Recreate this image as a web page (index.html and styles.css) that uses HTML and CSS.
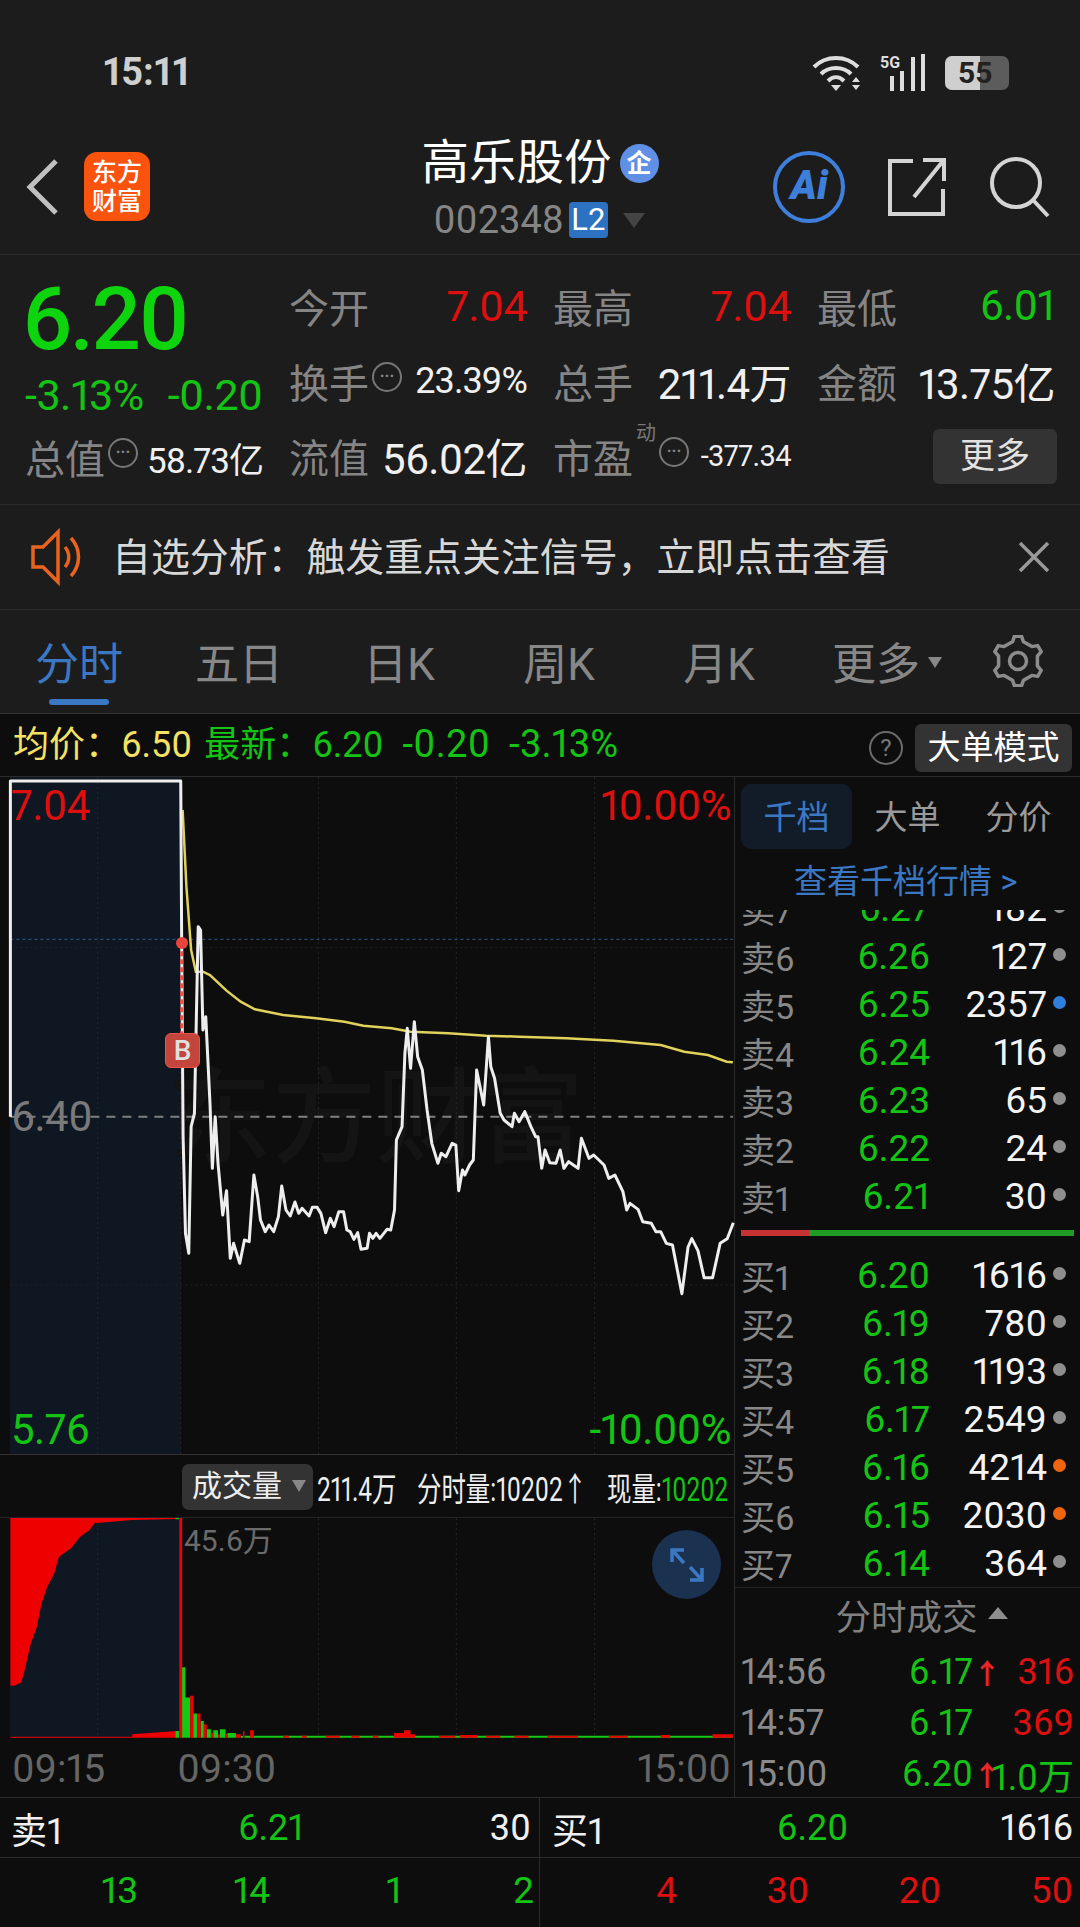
FILE: index.html
```html
<!DOCTYPE html>
<html lang="zh">
    <head>
        <meta charset="UTF-8" />
        <title>高乐股份</title>
        <link rel="stylesheet" href="styles.css">
    </head>
    <body>
        <div class="top-area">
            <div class="status-bar">
                <span class="clock">15:11</span>
                <div class="status-icons">
                    <svg width="52" height="38" viewBox="0 0 52 38" fill="none" stroke="#ddd" stroke-width="4">
                        <path d="M2 13C14 1 34 1 46 13" />
                        <path d="M9 20C17 12 31 12 39 20" />
                        <path d="M16 27C21 22 27 22 32 27" />
                        <path d="M19 31H29L24 37Z" fill="#ddd" stroke="none" />
                        <path d="M44 23L48 28H40ZM40 31H48L44 36Z" fill="#ddd" stroke="none" />
                    </svg>
                    <svg width="46" height="38" viewBox="0 0 46 38" fill="#ddd">
                        <text x="0" y="14" class="five-g">5G</text>
                        <rect x="10" y="22" width="4" height="15" />
                        <rect x="20" y="17" width="4" height="20" />
                        <rect x="31" y="3" width="4" height="34" />
                        <rect x="41" y="0" width="4" height="37" />
                    </svg>
                    <div class="battery"><span class="battery-fill"></span><span class="battery-num">55</span></div>
                </div>
            </div>

            <header class="stock-header">
                <div class="header-left">
                    <svg width="34" height="58" viewBox="0 0 34 58" fill="none" stroke="#c0c0c0" stroke-width="5">
                        <path d="M31 3L5 29L31 55" />
                    </svg>
                    <div class="logo"><span>东方</span><span>财富</span></div>
                </div>
                <div class="header-title">
                    <div class="title-row">
                        <h1>高乐股份</h1>
                        <span class="ent-badge">企</span>
                    </div>
                    <div class="code-row">
                        <span>002348</span>
                        <span class="l2">L2</span>
                        <span class="code-arrow"></span>
                    </div>
                </div>
                <div class="header-right">
                    <div class="ai-btn">Ai</div>
                    <svg width="60" height="60" viewBox="0 0 60 60" fill="none" stroke="#d4d4d4" stroke-width="4">
                        <path d="M26 4H3V57H56V32" />
                        <path d="M56 4L27 40M36 3H57V24" />
                    </svg>
                    <svg width="62" height="62" viewBox="0 0 62 62" fill="none" stroke="#d4d4d4" stroke-width="4">
                        <circle cx="27" cy="27" r="24" />
                        <path d="M44 44L59 60" />
                    </svg>
                </div>
            </header>

            <section class="quote">
                <div class="quote-left">
                    <div class="price">6.20</div>
                    <div class="change"><span>-3.13%</span><span>-0.20</span></div>
                    <div class="total">
                        <span class="lbl">总值</span><span class="more-dot">···</span><span class="val-s">58.73亿</span>
                    </div>
                </div>
                <div class="quote-grid">
                    <div class="cell"><span class="lbl">今开</span><span class="val up">7.04</span></div>
                    <div class="cell"><span class="lbl">最高</span><span class="val up">7.04</span></div>
                    <div class="cell"><span class="lbl">最低</span><span class="val down">6.01</span></div>
                    <div class="cell"><span class="lbl">换手</span><span class="more-dot">···</span><span class="val-s">23.39%</span></div>
                    <div class="cell"><span class="lbl">总手</span><span class="val">211.4万</span></div>
                    <div class="cell"><span class="lbl">金额</span><span class="val">13.75亿</span></div>
                    <div class="cell"><span class="lbl">流值</span><span class="val">56.02亿</span></div>
                    <div class="cell">
                        <span class="lbl">市盈</span><sup class="dong">动</sup><span class="more-dot">···</span><span class="val-xs">-377.34</span>
                    </div>
                    <div class="cell cell-end"><button class="more-btn">更多</button></div>
                </div>
            </section>

            <section class="notice">
                <svg width="52" height="60" viewBox="0 0 52 60" fill="none" stroke="#e8641e" stroke-width="3.5">
                    <path d="M3 20H13L28 5V55L13 40H3Z" />
                    <path d="M35 20C40 26 40 34 35 40" />
                    <path d="M41 11C51 22 51 38 41 49" />
                </svg>
                <p>自选分析：触发重点关注信号，立即点击查看</p>
                <svg class="notice-close" width="32" height="30" viewBox="0 0 32 30" stroke="#999" stroke-width="3.5">
                    <path d="M2 1L30 29M30 1L2 29" />
                </svg>
            </section>

            <nav class="tabs">
                <span class="tab active">分时</span>
                <span class="tab">五日</span>
                <span class="tab">日K</span>
                <span class="tab">周K</span>
                <span class="tab">月K</span>
                <span class="tab tab-more">更多<i></i></span>
                <svg class="gear" width="52" height="52" viewBox="0 0 52 52" fill="none" stroke="#8c8c8c" stroke-width="3.5" stroke-linejoin="round">
                    <path d="M20.5 6.8L22.5 1.2H29.5L31.5 6.8L39.9 11.6L45.7 10.6L49.2 16.6L45.4 21.2V30.8L49.2 35.4L45.7 41.4L39.9 40.4L31.5 45.2L29.5 50.8H22.5L20.5 45.2L12.1 40.4L6.3 41.4L2.8 35.4L6.6 30.8V21.2L2.8 16.6L6.3 10.6L12.1 11.6Z" />
                    <circle cx="26" cy="26" r="8.5" />
                </svg>
            </nav>
        </div>

        <div class="info-bar">
            <span class="yellow info-avg">均价：6.50</span>
            <span class="green">最新：6.20</span>
            <span class="green info-num">-0.20</span>
            <span class="green info-num">-3.13%</span>
            <span class="help">?</span>
            <button class="big-btn">大单模式</button>
        </div>

        <main class="board">
            <div class="charts">
                <div class="price-chart">
                    <div class="pre-market"></div>
                    <div class="watermark">东方财富</div>
                    <svg class="plot" width="735" height="678" viewBox="0 21 1557.5 2034" preserveAspectRatio="none" fill="none">
                        <path class="grid-v" d="M207 21V2055M383 21V2055M675 21V2055M967 21V2055M1260 21V2055" />
                        <path class="grid-v" d="M22 533H1553M22 1545H1553" />
                        <path class="line-blue" d="M22 508H1553" />
                        <path class="line-mid" d="M22 1040H1553" />
                        <polyline class="line-avg" points="387,120 395,350 405,540 415,605 430,605 445,615 480,662 510,695 540,718 600,735 670,745 730,755 770,767 830,775 870,785 950,790 1030,797 1100,800 1200,805 1300,812 1400,825 1450,845 1500,855 1540,875 1553,877" />
                        <polyline class="line-price" points="22,1040 22,33 383,33 385,520 388,1100 393,1390 400,1450 405,1070 412,1030 420,470 425,480 430,780 436,740 445,1000 450,1195 456,1040 462,1180 472,1335 480,1262 488,1465 495,1420 508,1480 518,1410 528,1415 538,1215 546,1280 552,1350 562,1385 570,1365 580,1385 590,1340 597,1248 606,1320 615,1338 625,1296 633,1330 640,1315 655,1338 662,1312 672,1312 680,1330 690,1388 700,1345 708,1370 718,1325 728,1325 735,1380 742,1385 750,1408 758,1388 765,1438 778,1435 783,1390 790,1405 797,1390 805,1405 820,1378 828,1380 836,1320 840,1110 852,1070 858,850 863,775 870,895 878,755 885,860 895,900 905,1020 915,1120 928,1180 935,1150 945,1160 958,1120 966,1125 972,1262 980,1200 985,1215 995,1185 1003,1170 1010,900 1025,1005 1035,800 1040,890 1048,925 1060,1030 1068,1050 1085,1070 1090,1030 1100,1055 1112,1025 1125,1070 1135,1100 1140,1100 1148,1195 1155,1140 1165,1178 1178,1180 1187,1140 1195,1195 1205,1175 1225,1195 1232,1105 1248,1165 1258,1155 1280,1185 1290,1225 1303,1215 1320,1265 1328,1320 1335,1300 1352,1318 1362,1355 1380,1360 1390,1385 1400,1385 1412,1420 1425,1425 1445,1571 1458,1431 1466,1406 1479,1442 1492,1523 1510,1523 1526,1420 1541,1406 1554,1358" />
                        <path class="line-trade" d="M385 520V800" />
                    </svg>
                    <span class="trade-dot"></span>
                    <span class="b-badge">B</span>
                    <span class="axis axis-tl up">7.04</span>
                    <span class="axis axis-tr up">10.00%</span>
                    <span class="axis axis-ml">6.40</span>
                    <span class="axis axis-bl green">5.76</span>
                    <span class="axis axis-br green">-10.00%</span>
                </div>

                <div class="vol-head">
                    <span class="vol-pill">成交量<i></i></span>
                    <span class="vol-total">211.4万</span>
                    <span class="vol-min">分时量:10202↑</span>
                    <span class="vol-now">现量:<em>10202</em></span>
                </div>

                <div class="vol-chart">
                    <div class="pre-market"></div>
                    <svg class="plot" width="735" height="220" viewBox="0 234 1557.5 657" preserveAspectRatio="none">
                        <path class="grid-v" fill="none" d="M207 234V890M675 234V890M967 234V890M1260 234V890" />
                        <path fill="#ee0000" d="M22 234H375V237L280 240L200 250L190 270L170 290L150 325L125 350L115 400L100 440L88 490L78 560L65 610L52 690L45 725L30 735H22ZM280 880L375 870V890H280ZM22 887H280V890H22Z" />
                        <path fill="#13c913" d="M372 234H380V238H372ZM372 870H380V890H372Z" />
                        <path fill="#13c913" d="M385 680H393V890H385ZM393 770H403V890H393ZM408 818H418V890H408ZM425 840H432V890H425ZM438 865H447V890H438ZM452 868H462V890H452ZM466 865H478V890H466ZM482 876H500V890H482ZM510 885H515V890H510ZM518 884H1553V890H518Z" />
                        <path fill="#ee0000" d="M380 234H386V890H380ZM403 765H410V890H403ZM418 818H425V890H418ZM432 850H438V890H432ZM447 875H452V890H447ZM462 880H466V890H462ZM478 878H482V890H478ZM500 880H510V890H500ZM515 870H518V890H515ZM530 868H538V890H530ZM600 884H612V890H600ZM640 884H650V890H640ZM690 884H720V890H690ZM745 884H762V890H745ZM790 884H802V890H790ZM835 876H856V890H835ZM856 868H870V890H856ZM870 880H880V890H870ZM930 884H965V890H930ZM975 882H1012V890H975ZM1030 884H1060V890H1030ZM1090 884H1120V890H1090ZM1160 884H1225V890H1160ZM1290 884H1330V890H1290ZM1400 882H1420V890H1400ZM1510 880H1553V890H1510Z" />
                    </svg>
                    <span class="vol-max">45.6万</span>
                    <span class="expand">
                        <svg width="36" height="36" viewBox="0 0 36 36" fill="none" stroke="#3b78c4" stroke-width="3.5">
                            <path d="M3 15V3H15M3 3L15 16M33 21V33H21M33 33L21 20" />
                        </svg>
                    </span>
                </div>

                <div class="times">
                    <span>09:15</span>
                    <span class="time-open">09:30</span>
                    <span class="time-end">15:00</span>
                </div>
            </div>

            <aside class="side">
                <div class="side-tabs">
                    <span class="side-tab active">千档</span>
                    <span class="side-tab">大单</span>
                    <span class="side-tab">分价</span>
                </div>
                <a class="side-link">查看千档行情 &gt;</a>

                <div class="sell-list">
                    <div class="order order-clip"><span class="o-name">卖7</span><span class="o-price">6.27</span><span class="o-qty">182</span><i class="dot"></i></div>
                    <div class="order"><span class="o-name">卖6</span><span class="o-price">6.26</span><span class="o-qty">127</span><i class="dot"></i></div>
                    <div class="order"><span class="o-name">卖5</span><span class="o-price">6.25</span><span class="o-qty">2357</span><i class="dot blue"></i></div>
                    <div class="order"><span class="o-name">卖4</span><span class="o-price">6.24</span><span class="o-qty">116</span><i class="dot"></i></div>
                    <div class="order"><span class="o-name">卖3</span><span class="o-price">6.23</span><span class="o-qty">65</span><i class="dot"></i></div>
                    <div class="order"><span class="o-name">卖2</span><span class="o-price">6.22</span><span class="o-qty">24</span><i class="dot"></i></div>
                    <div class="order"><span class="o-name">卖1</span><span class="o-price">6.21</span><span class="o-qty">30</span><i class="dot"></i></div>
                </div>

                <div class="ratio"><span class="ratio-red"></span><span class="ratio-green"></span></div>

                <div class="buy-list">
                    <div class="order"><span class="o-name">买1</span><span class="o-price">6.20</span><span class="o-qty">1616</span><i class="dot"></i></div>
                    <div class="order"><span class="o-name">买2</span><span class="o-price">6.19</span><span class="o-qty">780</span><i class="dot"></i></div>
                    <div class="order"><span class="o-name">买3</span><span class="o-price">6.18</span><span class="o-qty">1193</span><i class="dot"></i></div>
                    <div class="order"><span class="o-name">买4</span><span class="o-price">6.17</span><span class="o-qty">2549</span><i class="dot"></i></div>
                    <div class="order"><span class="o-name">买5</span><span class="o-price">6.16</span><span class="o-qty">4214</span><i class="dot orange"></i></div>
                    <div class="order"><span class="o-name">买6</span><span class="o-price">6.15</span><span class="o-qty">2030</span><i class="dot orange"></i></div>
                    <div class="order"><span class="o-name">买7</span><span class="o-price">6.14</span><span class="o-qty">364</span><i class="dot"></i></div>
                </div>

                <div class="trade-title">分时成交<i></i></div>
                <div class="trade"><span class="t-time">14:56</span><span class="t-price">6.17</span><span class="t-arrow">↑</span><span class="t-qty up">316</span></div>
                <div class="trade"><span class="t-time">14:57</span><span class="t-price">6.17</span><span class="t-arrow"></span><span class="t-qty up">369</span></div>
                <div class="trade"><span class="t-time">15:00</span><span class="t-price">6.20</span><span class="t-arrow">↑</span><span class="t-qty green">1.0万</span></div>
            </aside>
        </main>

        <footer class="bottom">
            <div class="bottom-half half-left">
                <div class="bottom-row">
                    <span>卖1</span><span class="green">6.21</span><span>30</span>
                </div>
                <div class="ticks green">
                    <span>13</span><span>14</span><span>1</span><span>2</span>
                </div>
            </div>
            <div class="bottom-half half-right">
                <div class="bottom-row">
                    <span>买1</span><span class="green">6.20</span><span>1616</span>
                </div>
                <div class="ticks up">
                    <span>4</span><span>30</span><span>20</span><span>50</span>
                </div>
            </div>
        </footer>
    </body>
</html>
```

FILE: styles.css
```css
* {
    box-sizing: border-box;
}

html,
body {
    margin: 0;
    padding: 0;
}

body {
    width: 1080px;
    height: 1927px;
    overflow: hidden;
    background-color: #0d0d0d;
    color: #f0f0f0;
    font-family: Roboto, "Noto Sans CJK SC", sans-serif;
    font-variant-numeric: proportional-nums;
}

button {
    border: none;
    font-family: inherit;
}

.up {
    color: #dd0f0f;
}

.down,
.green {
    color: #14c414;
}

.yellow {
    color: #f5e264;
}

/* top */
.top-area {
    background-color: #1c1c1c;
}

.status-bar {
    height: 115px;
    padding: 52px 71px 0 103px;
    display: flex;
    justify-content: space-between;
    align-items: flex-start;
}

.clock {
    font-size: 38px;
    font-weight: 700;
    line-height: 40px;
    color: #cfcfcf;
}

.status-icons {
    display: flex;
    align-items: center;
    gap: 16px;
    margin-top: 2px;
}

.five-g {
    font-size: 16px;
    font-weight: 700;
}

.battery {
    position: relative;
    width: 64px;
    height: 34px;
    margin-left: 3px;
    border-radius: 7px;
    background-color: #5c5c5c;
    overflow: hidden;
}

.battery-fill {
    display: block;
    width: 35px;
    height: 34px;
    background-color: #cfcfcf;
}

.battery-num {
    position: absolute;
    left: 13px;
    top: 0;
    font-size: 30px;
    line-height: 34px;
    font-weight: 700;
    color: #222;
}

.stock-header {
    height: 140px;
    display: grid;
    grid-template-columns: 1fr auto 1fr;
    border-bottom: 1px solid #2b2b2b;
}

.header-left {
    display: flex;
    align-items: center;
    gap: 25px;
    padding: 4px 0 0 25px;
}

.logo {
    width: 66px;
    height: 69px;
    border-radius: 13px;
    background-color: #f9530e;
    color: #fff;
    display: flex;
    flex-direction: column;
    align-items: center;
    justify-content: center;
    font-size: 25px;
    line-height: 29px;
    font-weight: 500;
}

.title-row {
    display: flex;
    align-items: center;
    gap: 8px;
    height: 58px;
    margin-top: 19px;
}

.title-row h1 {
    margin: 0;
    font-size: 47.5px;
    font-weight: 400;
    line-height: 58px;
    color: #fff;
}

.ent-badge {
    width: 39px;
    height: 39px;
    border-radius: 50%;
    background-color: #5f90e6;
    color: #fff;
    font-size: 25px;
    font-weight: 700;
    line-height: 39px;
    text-align: center;
}

.code-row {
    display: flex;
    align-items: center;
    gap: 5px;
    padding-left: 12px;
    height: 40px;
    margin-top: 8px;
    font-size: 38px;
    color: #858585;
}

.l2 {
    width: 39px;
    height: 36px;
    border-radius: 4px;
    background-color: #2c72c0;
    color: #fff;
    font-size: 31px;
    line-height: 36px;
    text-align: center;
}

.code-arrow {
    margin-left: 10px;
    border-left: 11px solid transparent;
    border-right: 11px solid transparent;
    border-top: 15px solid #444;
}

.header-right {
    display: flex;
    justify-content: flex-end;
    align-items: center;
    gap: 42px;
    padding: 4px 29px 0 0;
}

.ai-btn {
    width: 72px;
    height: 72px;
    border: 4px solid #3f7fdc;
    border-radius: 50%;
    color: #3f7fdc;
    font-size: 40px;
    font-weight: 900;
    font-style: italic;
    line-height: 62px;
    text-align: center;
}

/* quote */
.quote {
    height: 250px;
    display: flex;
    border-bottom: 1px solid #2b2b2b;
}

.quote-left {
    width: 289px;
    padding-left: 25px;
}

.price {
    font-size: 87px;
    font-weight: 500;
    letter-spacing: -2.5px;
    line-height: 86px;
    margin: 21px 0 0 -3px;
    color: #0ed40e;
}

.change {
    display: flex;
    gap: 24px;
    margin-top: 10px;
    font-size: 43px;
    line-height: 46px;
    color: #14c414;
    letter-spacing: -0.5px;
}

.total {
    display: flex;
    align-items: center;
    width: 238px;
    height: 64px;
    margin-top: 7px;
}

.quote-grid {
    display: grid;
    grid-template-columns: repeat(3, 238px);
    grid-auto-rows: 75px;
    column-gap: 26px;
    padding-top: 13px;
}

.cell {
    display: flex;
    align-items: center;
    justify-content: space-between;
}

.cell-end {
    justify-content: flex-end;
}

.lbl {
    font-size: 40px;
    color: #858585;
    white-space: nowrap;
}

.val {
    font-size: 42px;
    letter-spacing: -0.6px;
    white-space: nowrap;
}

.val.up {
    font-size: 43px;
}

.val-s {
    font-size: 36px;
    letter-spacing: -0.9px;
    margin-left: auto;
    white-space: nowrap;
}

.total .val-s {
    font-size: 35px;
    letter-spacing: -1px;
}

.val-xs {
    font-size: 29px;
    letter-spacing: -0.6px;
    margin-left: auto;
    white-space: nowrap;
}

.more-dot {
    width: 30px;
    height: 30px;
    flex: none;
    margin: -8px 0 0 3px;
    border: 2px solid #777;
    border-radius: 50%;
    color: #888;
    font-size: 16px;
    font-weight: 700;
    line-height: 24px;
    text-align: center;
}

.dong {
    align-self: flex-start;
    margin: 4px 0 0 3px;
    font-size: 20px;
    line-height: 22px;
    color: #777;
}

.more-btn {
    width: 124px;
    height: 55px;
    margin-top: 2px;
    margin-right: -2px;
    border-radius: 6px;
    background-color: #333;
    color: #e2e2e2;
    font-size: 35px;
    line-height: 55px;
    padding: 0;
}

.notice {
    height: 105px;
    display: flex;
    align-items: center;
    gap: 30px;
    padding: 0 30px;
    border-bottom: 1px solid #2b2b2b;
}

.notice p {
    flex: 1;
    margin: -6px 0 0;
    font-size: 38.9px;
    color: #d8d8d8;
    white-space: nowrap;
}

.tabs {
    height: 104px;
    display: flex;
    align-items: center;
    border-bottom: 1px solid #333;
    padding-bottom: 2px;
}

.tab {
    width: 160px;
    margin-left: -1px;
    margin-right: 1px;
    font-size: 44px;
    color: #878787;
    text-align: center;
}

.tab.active {
    position: relative;
    color: #3b78c4;
}

.tab.active::after {
    content: "";
    position: absolute;
    left: 50px;
    top: 70px;
    width: 60px;
    height: 6px;
    border-radius: 3px;
    background-color: #3b78c4;
}

.tab-more {
    padding-left: 16px;
    margin-right: 33px;
    white-space: nowrap;
}

.tab-more i {
    display: inline-block;
    margin: 0 0 12px 8px;
    border-left: 7px solid transparent;
    border-right: 7px solid transparent;
    border-top: 11px solid #878787;
}

/* info line */
.info-bar {
    height: 63px;
    display: flex;
    align-items: baseline;
    padding: 6px 8px 0 13px;
    background-color: #0d0d0d;
    font-size: 36px;
    line-height: 48px;
    border-bottom: 1px solid #2b2b2b;
}

.info-bar span {
    margin-right: 19px;
    white-space: nowrap;
}

.info-bar .info-avg {
    margin-right: 12px;
}

.info-bar .info-num {
    font-size: 38px;
    letter-spacing: 0.3px;
}

.info-bar .help {
    width: 34px;
    height: 34px;
    margin: 0 12px 0 auto;
    border: 2px solid #6b6b6b;
    border-radius: 50%;
    align-self: center;
    color: #777;
    font-size: 24px;
    line-height: 30px;
    text-align: center;
}

.big-btn {
    width: 157px;
    height: 48px;
    padding: 0;
    align-self: center;
    border-radius: 6px;
    background-color: #333;
    color: #fff;
    font-size: 33px;
    line-height: 48px;
}

/* charts */
.board {
    display: flex;
    height: 1020px;
}

.charts {
    width: 735px;
    border-right: 1px solid #2b2b2b;
}

.price-chart {
    position: relative;
    width: 735px;
    height: 678px;
    border-bottom: 1px solid #333;
}

.pre-market {
    position: absolute;
    left: 10px;
    top: 0;
    width: 171px;
    height: 100%;
    background-color: #0f1722;
}

.plot {
    position: absolute;
    left: 0;
    top: 0;
}

.plot path,
.plot polyline {
    vector-effect: non-scaling-stroke;
}

.grid-v {
    stroke: #252525;
    stroke-width: 1;
    stroke-dasharray: 2 3;
}

.line-blue {
    stroke: #2f5a8c;
    stroke-width: 1;
    stroke-dasharray: 3 3;
}

.line-mid {
    stroke: #808080;
    stroke-width: 2;
    stroke-dasharray: 9 7;
}

.line-avg {
    stroke: #e0d25a;
    stroke-width: 2.5;
    fill: none;
}

.line-price {
    stroke: #eeeeee;
    stroke-width: 3;
    stroke-linejoin: round;
    fill: none;
}

.line-trade {
    stroke: #e9544c;
    stroke-width: 3;
    stroke-dasharray: 5 3;
}

.watermark {
    position: absolute;
    left: 168px;
    top: 288px;
    font-size: 104px;
    line-height: 110px;
    color: #141414;
    white-space: nowrap;
    font-weight: 500;
}

.trade-dot {
    position: absolute;
    left: 176px;
    top: 160px;
    width: 12px;
    height: 12px;
    border-radius: 50%;
    background-color: #e9453c;
}

.b-badge {
    position: absolute;
    left: 165px;
    top: 256px;
    width: 35px;
    height: 35px;
    border-radius: 6px;
    border: 1px solid #e9544c;
    background-color: #c4453c;
    color: #e0e0e0;
    font-size: 28px;
    font-weight: 500;
    line-height: 33px;
    text-align: center;
}

.axis {
    position: absolute;
    font-size: 42px;
    line-height: 46px;
    letter-spacing: -0.5px;
}

.axis-tl {
    left: 11px;
    top: 6px;
}

.axis-tr {
    right: 4px;
    top: 6px;
}

.axis-ml {
    left: 11px;
    top: 317px;
    color: #7a7a7a;
}

.axis-bl {
    left: 11px;
    top: 630px;
}

.axis-br {
    right: 4px;
    top: 630px;
}

.vol-head {
    height: 62px;
    display: flex;
    align-items: center;
    padding: 1px 0 0 182px;
    font-size: 33px;
    white-space: nowrap;
    color: #eee;
}

.vol-pill {
    width: 131px;
    height: 46px;
    flex: none;
    border-radius: 7px;
    background-color: #333;
    font-size: 30px;
    line-height: 44px;
    padding-left: 10px;
    margin-right: 4px;
}

.vol-pill i {
    display: inline-block;
    margin: 0 0 4px 10px;
    border-left: 7px solid transparent;
    border-right: 7px solid transparent;
    border-top: 12px solid #888;
}

.vol-total,
.vol-min,
.vol-now {
    transform: scaleX(0.74);
    transform-origin: left center;
}

.vol-total {
    width: 100px;
}

.vol-min {
    width: 190px;
}

.vol-now em {
    font-style: normal;
    color: #14c414;
}

.vol-chart {
    position: relative;
    width: 735px;
    height: 220px;
    border-top: 1px solid #252525;
}

.vol-max {
    position: absolute;
    left: 184px;
    top: 3px;
    font-size: 30px;
    line-height: 40px;
    color: #6a6a6a;
}

.expand {
    position: absolute;
    left: 652px;
    top: 12px;
    width: 69px;
    height: 69px;
    border-radius: 50%;
    background-color: #1b3150;
    display: flex;
    align-items: center;
    justify-content: center;
}

.times {
    height: 60px;
    display: flex;
    align-items: center;
    padding: 3px 3px 0 12px;
    font-size: 39px;
    color: #666;
}

.time-open {
    margin-left: 72px;
}

.time-end {
    margin-left: auto;
}

/* side panel */
.side {
    width: 345px;
    padding-top: 7px;
}

.side-tabs {
    display: flex;
    padding-left: 6px;
    height: 65px;
}

.side-tab {
    width: 111px;
    text-align: center;
    font-size: 33px;
    line-height: 68px;
    color: #999;
}

.side-tab.active {
    border-radius: 10px;
    background-color: #121c28;
    color: #3b78c4;
}

.side-link {
    display: block;
    height: 61px;
    padding-left: 59px;
    font-size: 33px;
    line-height: 66px;
    color: #3b78c4;
    white-space: nowrap;
}

.sell-list {
    height: 312px;
    overflow: hidden;
}

.order {
    height: 48px;
    display: flex;
    align-items: center;
    padding-left: 6px;
}

.order-clip {
    margin-top: -26px;
}

.o-name {
    width: 82px;
    font-size: 34px;
    color: #888;
    white-space: nowrap;
}

.o-price {
    width: 107px;
    font-size: 37px;
    text-align: right;
    color: #14c414;
}

.o-qty {
    width: 117px;
    font-size: 37px;
    text-align: right;
    color: #f4f4f4;
}

.dot {
    width: 13px;
    height: 13px;
    margin: -4px 0 0 6px;
    border-radius: 50%;
    background-color: #8e8e8e;
}

.dot.blue {
    background-color: #2f7fdc;
}

.dot.orange {
    background-color: #ef6410;
}

.ratio {
    display: flex;
    width: 333px;
    height: 6px;
    margin: 8px 0 15px 6px;
}

.ratio-red {
    width: 68px;
    background-color: #c73232;
}

.ratio-green {
    flex: 1;
    background-color: #1f9c24;
}

.trade-title {
    height: 62px;
    margin-bottom: -3px;
    padding-left: 28px;
    border-top: 1px solid #252525;
    font-size: 35.5px;
    line-height: 60px;
    color: #808080;
    text-align: center;
}

.trade-title i {
    display: inline-block;
    margin: 0 0 11px 10px;
    border-left: 10px solid transparent;
    border-right: 10px solid transparent;
    border-bottom: 12px solid #8e8e8e;
}

.trade {
    height: 51px;
    display: flex;
    align-items: center;
    padding-left: 6px;
    font-size: 36px;
}

.t-time {
    width: 100px;
    color: #8a8a8a;
}

.t-price {
    width: 132px;
    text-align: right;
    color: #14c414;
}

.t-arrow {
    width: 19px;
    color: #e8262a;
    font-size: 28px;
    font-weight: 700;
    text-align: center;
}

.t-qty {
    width: 82px;
    text-align: right;
    white-space: nowrap;
}

/* bottom */
.bottom {
    display: flex;
    height: 130px;
    border-top: 1px solid #2b2b2b;
}

.bottom-half {
    height: 100%;
}

.half-left {
    width: 540px;
    border-right: 1px solid #2b2b2b;
}

.half-right {
    flex: 1;
}

.bottom-row {
    height: 60px;
    display: grid;
    grid-template-columns: 1fr 1fr 1fr;
    align-items: center;
    font-size: 36px;
    border-bottom: 1px solid #2b2b2b;
}

.half-left .bottom-row {
    padding: 0 8px 0 11px;
}

.half-right .bottom-row {
    padding: 0 7px 0 12px;
}

.bottom-row span:nth-child(2) {
    text-align: center;
}

.bottom-row span:nth-child(3) {
    text-align: right;
}

.ticks {
    height: 69px;
    display: grid;
    grid-template-columns: repeat(4, 132px);
    justify-content: end;
    align-items: center;
    font-size: 37px;
    text-align: right;
    padding-bottom: 4px;
}

.half-left .ticks {
    padding-right: 5px;
}

.half-right .ticks {
    padding-right: 7px;
}
```
